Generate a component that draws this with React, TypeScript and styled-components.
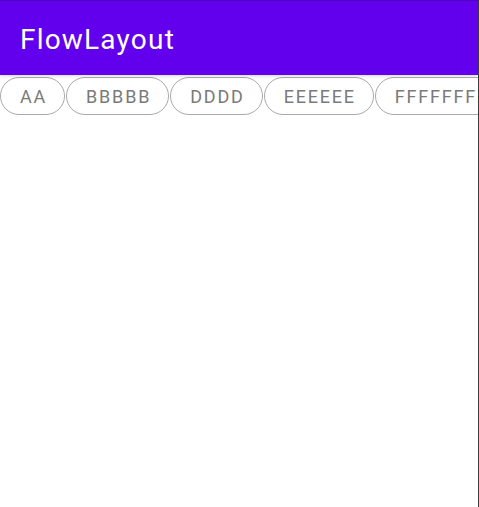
import React from "react";
import styled, { createGlobalStyle } from "styled-components";

const Global = createGlobalStyle`
  html, body { margin: 0; padding: 0; background: #fff; }
  body { font-family: Roboto, "Noto Sans", sans-serif; overflow: hidden; }
`;

const Screen = styled.div`
  width: 478px;
  height: 507px;
  border-right: 1px solid #3a3a3a;
  background: #fff;
  display: flex;
  flex-direction: column;
  overflow: hidden;
`;

const AppBar = styled.header`
  height: 75px;
  background: #6200ee;
  border-top: 1px solid #4a00c0;
  box-sizing: border-box;
  display: flex;
  align-items: center;
  padding: 3px 0 0 20px;
  box-shadow: 0 1px 3px rgba(0, 0, 0, 0.18);
  position: relative;
  z-index: 1;
`;

const Title = styled.h1`
  margin: 0;
  color: #fff;
  font-size: 28px;
  font-weight: 400;
  letter-spacing: 1.2px;
`;

const Flow = styled.div`
  display: flex;
  flex-wrap: nowrap;
  gap: 1px;
  padding-top: 2px;
`;

const Chip = styled.span`
  flex: none;
  height: 38px;
  box-sizing: border-box;
  padding: 0 17px 0 19px;
  border: 1px solid #aaaaaa;
  border-radius: 19px;
  display: flex;
  align-items: center;
  color: #7a7a7a;
  font-size: 18px;
  letter-spacing: 1.8px;
`;

const tags = ["AA", "BBBBB", "DDDD", "EEEEEE", "FFFFFFF", "GG"];

export default function App() {
  return (
    <>
      <Global />
      <Screen>
        <AppBar>
          <Title>FlowLayout</Title>
        </AppBar>
        <Flow>
          {tags.map((t) => (
            <Chip key={t}>{t}</Chip>
          ))}
        </Flow>
      </Screen>
    </>
  );
}
